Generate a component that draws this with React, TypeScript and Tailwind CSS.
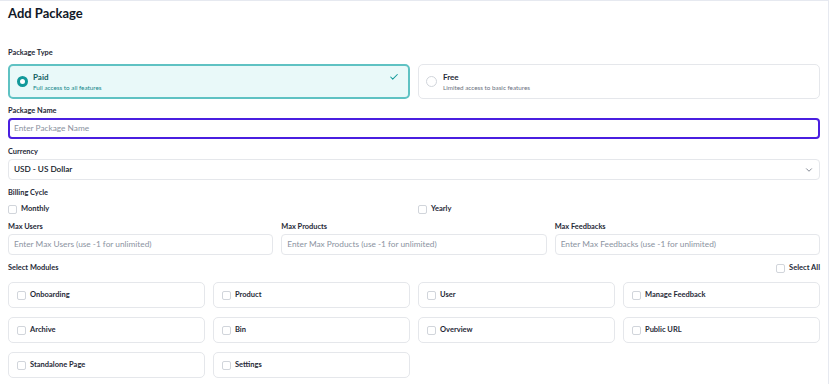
import { Check, ChevronDown } from "lucide-react"

const modules = [
  "Onboarding",
  "Product",
  "User",
  "Manage Feedback",
  "Archive",
  "Bin",
  "Overview",
  "Public URL",
  "Standalone Page",
  "Settings",
]

function Box() {
  return <span className="inline-block w-[9px] h-[9px] shrink-0 rounded-[2px] border border-[#d1d5db] bg-white" />
}

function Label({ children }: { children: React.ReactNode }) {
  return <div className="text-[7.4px] leading-[10px] font-bold text-[#1f2937]">{children}</div>
}

export default function App() {
  return (
    <div
      className="w-[829px] h-[384px] overflow-hidden bg-white border-t border-r border-[#e6e9f0] px-2 flex flex-col"
      style={{ fontFamily: "Lato, 'Noto Sans', sans-serif" }}
    >
      <h1 className="mt-[3px] text-[13px] leading-[18px] font-bold text-[#111827]">Add Package</h1>

      <div className="mt-[26px]">
        <Label>Package Type</Label>
      </div>
      <div className="mt-[6px] grid grid-cols-2 gap-2">
        <div className="h-[35px] rounded-[5px] border-2 border-[#5fc2c3] bg-[#e9f9f9] flex items-center pl-[7px] pr-[9px]">
          <span className="w-[11px] h-[11px] rounded-full border-[3px] border-[#12999a] bg-white shrink-0" />
          <div className="ml-[5px] flex-1">
            <div className="text-[8px] leading-[11px] font-bold text-[#115e5e]">Paid</div>
            <div className="text-[6.3px] leading-[9px] text-[#12888a]">Full access to all features</div>
          </div>
          <Check className="w-[10px] h-[10px] text-[#12999a] -mt-[9px]" strokeWidth={2.5} />
        </div>
        <div className="h-[35px] rounded-[5px] border border-[#e5e7eb] bg-white flex items-center pl-[7px]">
          <span className="w-[11px] h-[11px] rounded-full border border-[#d1d5db] bg-white shrink-0" />
          <div className="ml-[6px]">
            <div className="text-[8px] leading-[11px] font-bold text-[#1f2937]">Free</div>
            <div className="text-[6.3px] leading-[9px] text-[#6b7280]">Limited access to basic features</div>
          </div>
        </div>
      </div>

      <div className="mt-[7px]">
        <Label>Package Name</Label>
      </div>
      <div className="mt-[2px] h-[21px] rounded-[4px] border-2 border-[#4a1fe0] flex items-center px-[4px] text-[8.3px] text-[#8b93a1]">
        Enter Package Name
      </div>

      <div className="mt-[8px]">
        <Label>Currency</Label>
      </div>
      <div className="mt-[2px] h-[21px] rounded-[4px] border border-[#e5e7eb] flex items-center justify-between pl-[5px] pr-[5px] text-[8.2px] font-semibold text-[#111827]">
        <span>USD - US Dollar</span>
        <ChevronDown className="w-[10px] h-[10px] text-[#6b7280]" strokeWidth={2} />
      </div>

      <div className="mt-[8px]">
        <Label>Billing Cycle</Label>
      </div>
      <div className="mt-[5px] h-[12px] grid grid-cols-2 gap-2">
        <div className="flex items-center gap-[4px]">
          <Box />
          <span className="text-[7.5px] font-bold text-[#1f2937]">Monthly</span>
        </div>
        <div className="flex items-center gap-[4px]">
          <Box />
          <span className="text-[7.5px] font-bold text-[#1f2937]">Yearly</span>
        </div>
      </div>

      <div className="mt-[7px] grid grid-cols-3 gap-2">
        {[
          ["Max Users", "Enter Max Users (use -1 for unlimited)"],
          ["Max Products", "Enter Max Products (use -1 for unlimited)"],
          ["Max Feedbacks", "Enter Max Feedbacks (use -1 for unlimited)"],
        ].map(([label, ph]) => (
          <div key={label}>
            <Label>{label}</Label>
            <div className="mt-[2px] h-[21px] rounded-[4px] border border-[#e5e7eb] flex items-center px-[5px] text-[8.3px] text-[#8b93a1] whitespace-nowrap overflow-hidden">
              {ph}
            </div>
          </div>
        ))}
      </div>

      <div className="mt-[8px] flex items-center justify-between">
        <Label>Select Modules</Label>
        <div className="flex items-center gap-[4px]">
          <Box />
          <span className="text-[7.5px] leading-[10px] font-bold text-[#1f2937]">Select All</span>
        </div>
      </div>

      <div className="mt-[9px] grid grid-cols-4 gap-x-2 gap-y-[9px]">
        {modules.map((m) => (
          <div key={m} className="h-[26px] rounded-[5px] border border-[#e5e7eb] flex items-center pl-[8px] gap-[4px]">
            <Box />
            <span className="text-[7.5px] font-bold text-[#1f2937]">{m}</span>
          </div>
        ))}
      </div>
    </div>
  )
}
